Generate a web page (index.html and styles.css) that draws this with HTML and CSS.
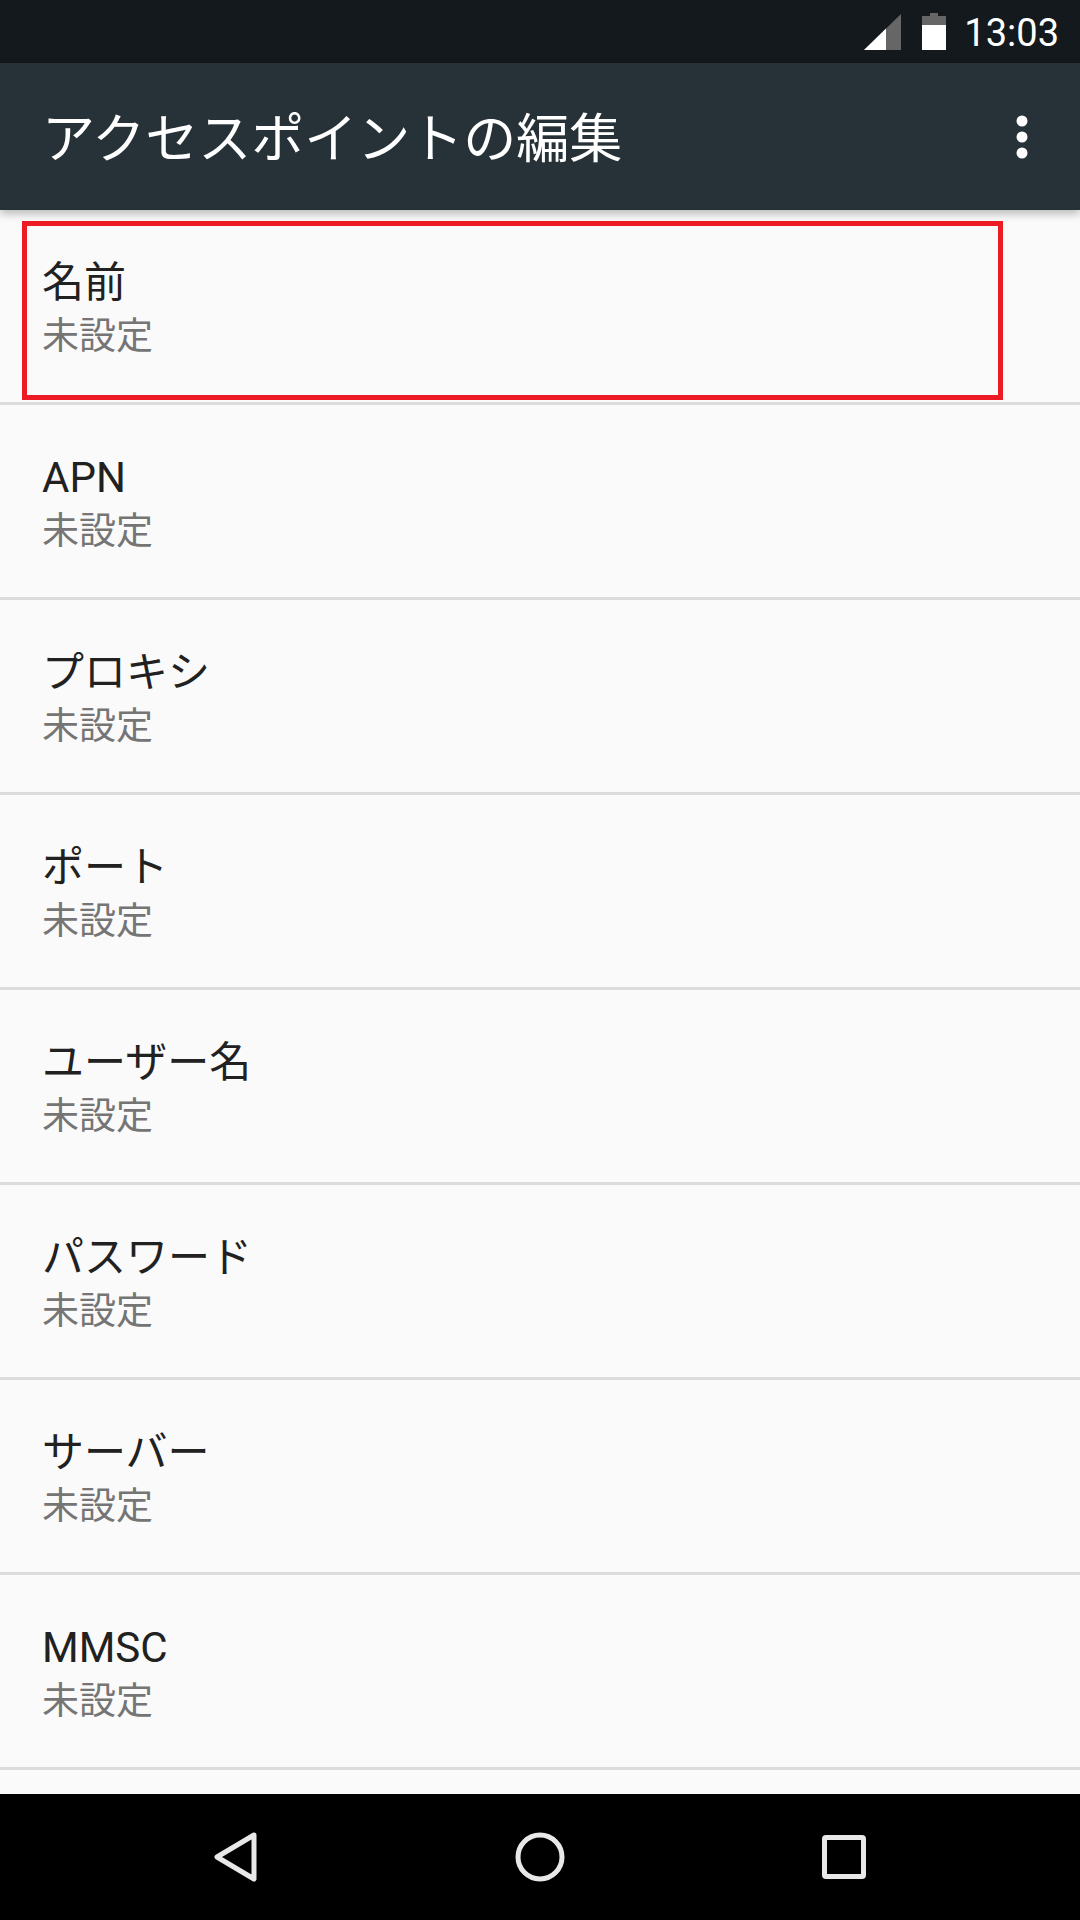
FILE: index.html
```html
<!DOCTYPE html>
<html lang="ja">
<head>
    <meta charset="UTF-8">
    <meta name="viewport" content="width=device-width, initial-scale=1.0">
    <title>アクセスポイントの編集</title>
    <link rel="stylesheet" href="styles.css">
</head>
<body>
    <div class="screen">
        <div class="status-bar">
            <svg class="signal-icon" width="37" height="36" viewBox="0 0 37 36">
                <polygon points="0,36 37,0 37,36" fill="#666"/>
                <polygon points="0,36 22,14.6 22,36" fill="#fff"/>
            </svg>
            <svg class="battery-icon" width="24" height="37" viewBox="0 0 24 37">
                <path d="M8 0h8v3h8v9H0V3h8z" fill="#666"/>
                <rect y="12" width="24" height="25" fill="#fff"/>
            </svg>
            <span class="clock">13:03</span>
        </div>

        <div class="toolbar">
            <h1>アクセスポイントの編集</h1>
            <svg class="more-icon" width="12" height="44" viewBox="0 0 12 44">
                <circle cx="6" cy="6" r="5.5" fill="#fff"/>
                <circle cx="6" cy="22" r="5.5" fill="#fff"/>
                <circle cx="6" cy="38" r="5.5" fill="#fff"/>
            </svg>
        </div>

        <div class="list">
            <div class="row">
                <div class="row-title">名前</div>
                <div class="row-value">未設定</div>
            </div>
            <div class="row">
                <div class="row-title">APN</div>
                <div class="row-value">未設定</div>
            </div>
            <div class="row">
                <div class="row-title">プロキシ</div>
                <div class="row-value">未設定</div>
            </div>
            <div class="row">
                <div class="row-title">ポート</div>
                <div class="row-value">未設定</div>
            </div>
            <div class="row">
                <div class="row-title">ユーザー名</div>
                <div class="row-value">未設定</div>
            </div>
            <div class="row">
                <div class="row-title">パスワード</div>
                <div class="row-value">未設定</div>
            </div>
            <div class="row">
                <div class="row-title">サーバー</div>
                <div class="row-value">未設定</div>
            </div>
            <div class="row">
                <div class="row-title">MMSC</div>
                <div class="row-value">未設定</div>
            </div>
            <div class="highlight"></div>
        </div>

        <div class="nav-bar">
            <svg width="44" height="52" viewBox="0 0 44 52">
                <path d="M40 4 L3 26 L40 48 Z" fill="none" stroke="#e8e8e8" stroke-width="5" stroke-linejoin="round"/>
            </svg>
            <svg width="50" height="50" viewBox="0 0 50 50">
                <circle cx="25" cy="25" r="22" fill="none" stroke="#e8e8e8" stroke-width="5"/>
            </svg>
            <svg width="44" height="44" viewBox="0 0 44 44">
                <rect x="2.5" y="2.5" width="39" height="39" rx="1.5" fill="none" stroke="#e8e8e8" stroke-width="5"/>
            </svg>
        </div>
    </div>
</body>
</html>
```

FILE: styles.css
```css
* {
    box-sizing: border-box;
}

body {
    margin: 0;
    font-family: Roboto, "Noto Sans CJK JP", sans-serif;
    background-color: #fafafa;
}

.screen {
    display: flex;
    flex-direction: column;
    height: 1920px;
    overflow: hidden;
}

.status-bar {
    display: flex;
    align-items: center;
    justify-content: flex-end;
    height: 63px;
    padding-right: 21px;
    background-color: #14191d;
    color: #fff;
}

.signal-icon {
    margin-right: 21px;
}

.battery-icon {
    margin-right: 18px;
}

.clock {
    margin-top: 2px;
    font-size: 38px;
}

.toolbar {
    position: relative;
    z-index: 1;
    display: flex;
    align-items: center;
    justify-content: space-between;
    height: 147px;
    padding: 0 52px 3px 42px;
    background-color: #263238;
    box-shadow: 0 4px 8px rgba(0, 0, 0, 0.25);
}

.toolbar h1 {
    margin: 0;
    font-size: 53px;
    font-weight: normal;
    color: #fff;
}

.more-icon {
    margin-top: 3px;
}

.list {
    position: relative;
    flex: 1;
    background-color: #fafafa;
}

.row {
    display: flex;
    flex-direction: column;
    justify-content: center;
    height: 195px;
    padding-left: 42px;
    border-bottom: 3px solid #dcdcdc;
}

.row-title {
    font-size: 42px;
    line-height: 52px;
    margin-top: 6px;
    color: #212121;
}

.row-value {
    font-size: 37px;
    line-height: 50px;
    margin-top: 3px;
    color: #757575;
}

/* red annotation around the first row */
.highlight {
    position: absolute;
    top: 11px;
    left: 22px;
    width: 981px;
    height: 179px;
    border: 5px solid #ed1c24;
}

.nav-bar {
    display: flex;
    align-items: center;
    height: 126px;
    padding-left: 214px;
    background-color: #000;
}

.nav-bar svg:nth-child(2) {
    margin-left: 257px;
}

.nav-bar svg:nth-child(3) {
    margin-left: 257px;
}
```
